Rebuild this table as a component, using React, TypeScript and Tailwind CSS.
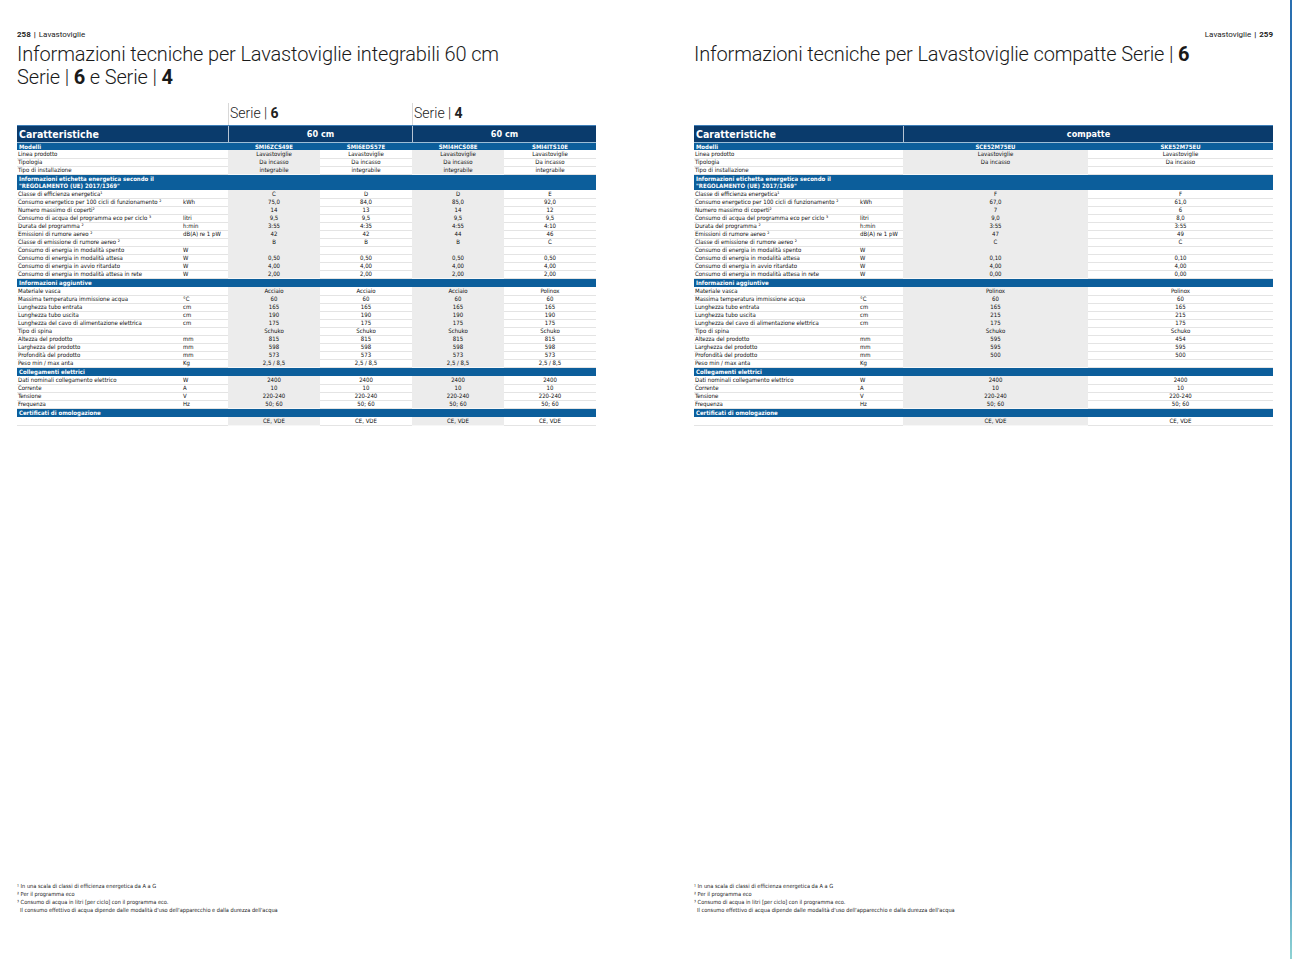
const cond = "font-['Liberation_Sans_Narrow','DejaVu_Sans_Condensed',sans-serif]";

type Row =
  | { kind: "row"; label: string; unit?: string; values: string[] }
  | { kind: "section"; lines: string[] };

const leftRows: Row[] = [
  { kind: "row", label: "Linea prodotto", values: ["Lavastoviglie", "Lavastoviglie", "Lavastoviglie", "Lavastoviglie"] },
  { kind: "row", label: "Tipologia", values: ["Da incasso", "Da incasso", "Da incasso", "Da incasso"] },
  { kind: "row", label: "Tipo di installazione", values: ["integrabile", "integrabile", "integrabile", "integrabile"] },
  { kind: "section", lines: ["Informazioni etichetta energetica secondo il", "\"REGOLAMENTO (UE) 2017/1369\""] },
  { kind: "row", label: "Classe di efficienza energetica¹", values: ["C", "D", "D", "E"] },
  { kind: "row", label: "Consumo energetico per 100 cicli di funzionamento ²", unit: "kWh", values: ["75,0", "84,0", "85,0", "92,0"] },
  { kind: "row", label: "Numero massimo di coperti²", values: ["14", "13", "14", "12"] },
  { kind: "row", label: "Consumo di acqua del programma eco per ciclo ³", unit: "litri", values: ["9,5", "9,5", "9,5", "9,5"] },
  { kind: "row", label: "Durata del programma ²", unit: "h:min", values: ["3:55", "4:35", "4:55", "4:10"] },
  { kind: "row", label: "Emissioni di rumore aereo ²", unit: "dB(A) re 1 pW", values: ["42", "42", "44", "46"] },
  { kind: "row", label: "Classe di emissione di rumore aereo ²", values: ["B", "B", "B", "C"] },
  { kind: "row", label: "Consumo di energia in modalità spento", unit: "W", values: ["", "", "", ""] },
  { kind: "row", label: "Consumo di energia in modalità attesa", unit: "W", values: ["0,50", "0,50", "0,50", "0,50"] },
  { kind: "row", label: "Consumo di energia in avvio ritardato", unit: "W", values: ["4,00", "4,00", "4,00", "4,00"] },
  { kind: "row", label: "Consumo di energia in modalità attesa in rete", unit: "W", values: ["2,00", "2,00", "2,00", "2,00"] },
  { kind: "section", lines: ["Informazioni aggiuntive"] },
  { kind: "row", label: "Materiale vasca", values: ["Acciaio", "Acciaio", "Acciaio", "Polinox"] },
  { kind: "row", label: "Massima temperatura immissione acqua", unit: "°C", values: ["60", "60", "60", "60"] },
  { kind: "row", label: "Lunghezza tubo entrata", unit: "cm", values: ["165", "165", "165", "165"] },
  { kind: "row", label: "Lunghezza tubo uscita", unit: "cm", values: ["190", "190", "190", "190"] },
  { kind: "row", label: "Lunghezza del cavo di alimentazione elettrica", unit: "cm", values: ["175", "175", "175", "175"] },
  { kind: "row", label: "Tipo di spina", values: ["Schuko", "Schuko", "Schuko", "Schuko"] },
  { kind: "row", label: "Altezza del prodotto", unit: "mm", values: ["815", "815", "815", "815"] },
  { kind: "row", label: "Larghezza del prodotto", unit: "mm", values: ["598", "598", "598", "598"] },
  { kind: "row", label: "Profondità del prodotto", unit: "mm", values: ["573", "573", "573", "573"] },
  { kind: "row", label: "Peso min / max anta", unit: "Kg", values: ["2,5 / 8,5", "2,5 / 8,5", "2,5 / 8,5", "2,5 / 8,5"] },
  { kind: "section", lines: ["Collegamenti elettrici"] },
  { kind: "row", label: "Dati nominali collegamento elettrico", unit: "W", values: ["2400", "2400", "2400", "2400"] },
  { kind: "row", label: "Corrente", unit: "A", values: ["10", "10", "10", "10"] },
  { kind: "row", label: "Tensione", unit: "V", values: ["220-240", "220-240", "220-240", "220-240"] },
  { kind: "row", label: "Frequenza", unit: "Hz", values: ["50; 60", "50; 60", "50; 60", "50; 60"] },
  { kind: "section", lines: ["Certificati di omologazione"] },
  { kind: "row", label: "", values: ["CE, VDE", "CE, VDE", "CE, VDE", "CE, VDE"] },
];

const rightRows: Row[] = [
  { kind: "row", label: "Linea prodotto", values: ["Lavastoviglie", "Lavastoviglie"] },
  { kind: "row", label: "Tipologia", values: ["Da incasso", "Da incasso"] },
  { kind: "row", label: "Tipo di installazione", values: ["", ""] },
  { kind: "section", lines: ["Informazioni etichetta energetica secondo il", "\"REGOLAMENTO (UE) 2017/1369\""] },
  { kind: "row", label: "Classe di efficienza energetica¹", values: ["F", "F"] },
  { kind: "row", label: "Consumo energetico per 100 cicli di funzionamento ²", unit: "kWh", values: ["67,0", "61,0"] },
  { kind: "row", label: "Numero massimo di coperti²", values: ["7", "6"] },
  { kind: "row", label: "Consumo di acqua del programma eco per ciclo ³", unit: "litri", values: ["9,0", "8,0"] },
  { kind: "row", label: "Durata del programma ²", unit: "h:min", values: ["3:55", "3:55"] },
  { kind: "row", label: "Emissioni di rumore aereo ²", unit: "dB(A) re 1 pW", values: ["47", "49"] },
  { kind: "row", label: "Classe di emissione di rumore aereo ²", values: ["C", "C"] },
  { kind: "row", label: "Consumo di energia in modalità spento", unit: "W", values: ["", ""] },
  { kind: "row", label: "Consumo di energia in modalità attesa", unit: "W", values: ["0,10", "0,10"] },
  { kind: "row", label: "Consumo di energia in avvio ritardato", unit: "W", values: ["4,00", "4,00"] },
  { kind: "row", label: "Consumo di energia in modalità attesa in rete", unit: "W", values: ["0,00", "0,00"] },
  { kind: "section", lines: ["Informazioni aggiuntive"] },
  { kind: "row", label: "Materiale vasca", values: ["Polinox", "Polinox"] },
  { kind: "row", label: "Massima temperatura immissione acqua", unit: "°C", values: ["60", "60"] },
  { kind: "row", label: "Lunghezza tubo entrata", unit: "cm", values: ["165", "165"] },
  { kind: "row", label: "Lunghezza tubo uscita", unit: "cm", values: ["215", "215"] },
  { kind: "row", label: "Lunghezza del cavo di alimentazione elettrica", unit: "cm", values: ["175", "175"] },
  { kind: "row", label: "Tipo di spina", values: ["Schuko", "Schuko"] },
  { kind: "row", label: "Altezza del prodotto", unit: "mm", values: ["595", "454"] },
  { kind: "row", label: "Larghezza del prodotto", unit: "mm", values: ["595", "595"] },
  { kind: "row", label: "Profondità del prodotto", unit: "mm", values: ["500", "500"] },
  { kind: "row", label: "Peso min / max anta", unit: "Kg", values: ["", ""] },
  { kind: "section", lines: ["Collegamenti elettrici"] },
  { kind: "row", label: "Dati nominali collegamento elettrico", unit: "W", values: ["2400", "2400"] },
  { kind: "row", label: "Corrente", unit: "A", values: ["10", "10"] },
  { kind: "row", label: "Tensione", unit: "V", values: ["220-240", "220-240"] },
  { kind: "row", label: "Frequenza", unit: "Hz", values: ["50; 60", "50; 60"] },
  { kind: "section", lines: ["Certificati di omologazione"] },
  { kind: "row", label: "", values: ["CE, VDE", "CE, VDE"] },
];

function SpecTable({ cols, rows, models, groups }: { cols: string; rows: Row[]; models: string[]; groups: string[] }) {
  return (
    <div className={`${cond} text-[#0d0d0d]`}>
      {/* top band */}
      <div className={`grid ${cols} h-[17px] bg-[#0a3b6c] border-t border-[#3f7fb8] text-white font-bold`}>
        <div className="col-span-2 pl-[2px] text-[10.5px] leading-[16px]">Caratteristiche</div>
        {groups.map((g, i) => (
          <div key={i} className="col-span-2 border-l border-white/70 text-center text-[9px] leading-[16px]">
            {g}
          </div>
        ))}
      </div>
      <div className={`grid ${cols} h-[8px] bg-[#0c5e9b] border-t border-white/60 text-white font-bold text-[6px] leading-[7px]`}>
        <div className="col-span-2 pl-[2px]">Modelli</div>
        {models.map((m) => (
          <div key={m} className="text-center">{m}</div>
        ))}
      </div>
      {rows.map((r, i) =>
        r.kind === "section" ? (
          <div
            key={i}
            className="bg-[#0c5e9b] border-t border-[#5b9bd0] text-white font-bold text-[6px] leading-[7px] pl-[2px] [&>div:last-child]:leading-[8px]"
          >
            {r.lines.map((l) => (
              <div key={l}>{l}</div>
            ))}
          </div>
        ) : (
          <div key={i} className={`grid ${cols} h-[8px] text-[6px] leading-[8px]`}>
            <div className="pl-[1px] whitespace-nowrap border-b border-[#e4e4e4]">{r.label}</div>
            <div className="whitespace-nowrap border-b border-[#e4e4e4]">{r.unit ?? ""}</div>
            {r.values.map((v, j) => (
              <div
                key={j}
                className={`text-center whitespace-nowrap border-b ${j % 2 === 0 ? "bg-[#ececec] border-[#f7f7f7]" : "border-[#e4e4e4]"}`}
              >
                {v}
              </div>
            ))}
          </div>
        )
      )}
    </div>
  );
}

function SerieLabel({ n }: { n: string }) {
  return (
    <div className="col-span-2 border-l border-[#d8d8d8] pl-[1px] text-[14px] leading-[20px] text-[#222] font-['Roboto',sans-serif] font-light">
      Serie | <span className="font-bold">{n}</span>
    </div>
  );
}

function Footnotes() {
  return (
    <div className={`${cond} text-[5.6px] leading-[8px] text-[#1a1a1a]`}>
      <div>¹ In una scala di classi di efficienza energetica da A a G</div>
      <div>² Per il programma eco</div>
      <div>³ Consumo di acqua in litri [per ciclo] con il programma eco.</div>
      <div className="pl-[3px]">Il consumo effettivo di acqua dipende dalle modalità d'uso dell'apparecchio e dalla durezza dell'acqua</div>
    </div>
  );
}

export default function App() {
  const leftCols = "grid-cols-[166px_45px_92px_92px_92px_92px]";
  const rightCols = "grid-cols-[166px_43px_185px_185px]";
  return (
    <div className="w-[1292px] h-[959px] bg-white flex text-[#1a1a1a] font-['Roboto',sans-serif]">
      {/* left page */}
      <div className="w-[646px] pl-[17px] pr-[50px] pt-[30px] flex flex-col">
        <div className="text-[8px] leading-[9px] text-[#222]">
          <span className="font-bold">258</span>
          <span className="font-bold mx-[3px]">|</span>
          <span>Lavastoviglie</span>
        </div>
        <h1 className="mt-[4px] text-[20px] leading-[23px] font-light tracking-[-0.15px]">
          Informazioni tecniche per Lavastoviglie integrabili 60 cm
          <br />
          Serie | <span className="font-bold">6</span> e Serie | <span className="font-bold">4</span>
        </h1>
        <div className={`mt-[14px] grid ${leftCols} h-[22px]`}>
          <div className="col-span-2" />
          <SerieLabel n="6" />
          <SerieLabel n="4" />
        </div>
        <SpecTable cols={leftCols} rows={leftRows} models={["SMI6ZCS49E", "SMI6EDS57E", "SMI4HCS08E", "SMI4ITS10E"]} groups={["60 cm", "60 cm"]} />
        <div className="mt-auto mb-[45px]">
          <Footnotes />
        </div>
      </div>
      {/* right page */}
      <div className="w-[644px] pl-[48px] pr-[17px] pt-[30px] flex flex-col">
        <div className="text-[8px] leading-[9px] text-[#222] text-right">
          <span>Lavastoviglie</span>
          <span className="font-bold mx-[3px]">|</span>
          <span className="font-bold">259</span>
        </div>
        <h1 className="mt-[4px] text-[20px] leading-[23px] font-light tracking-[-0.15px]">
          Informazioni tecniche per Lavastoviglie compatte Serie | <span className="font-bold">6</span>
        </h1>
        <div className="h-[59px]" />
        <SpecTable cols={rightCols} rows={rightRows} models={["SCE52M75EU", "SKE52M75EU"]} groups={["compatte"]} />
        <div className="mt-auto mb-[45px]">
          <Footnotes />
        </div>
      </div>
      <div className="w-[2px] h-full bg-gradient-to-b from-[#2a6fb0] via-[#2a78b5] via-85% to-[#8fd3d3]" />
    </div>
  );
}
